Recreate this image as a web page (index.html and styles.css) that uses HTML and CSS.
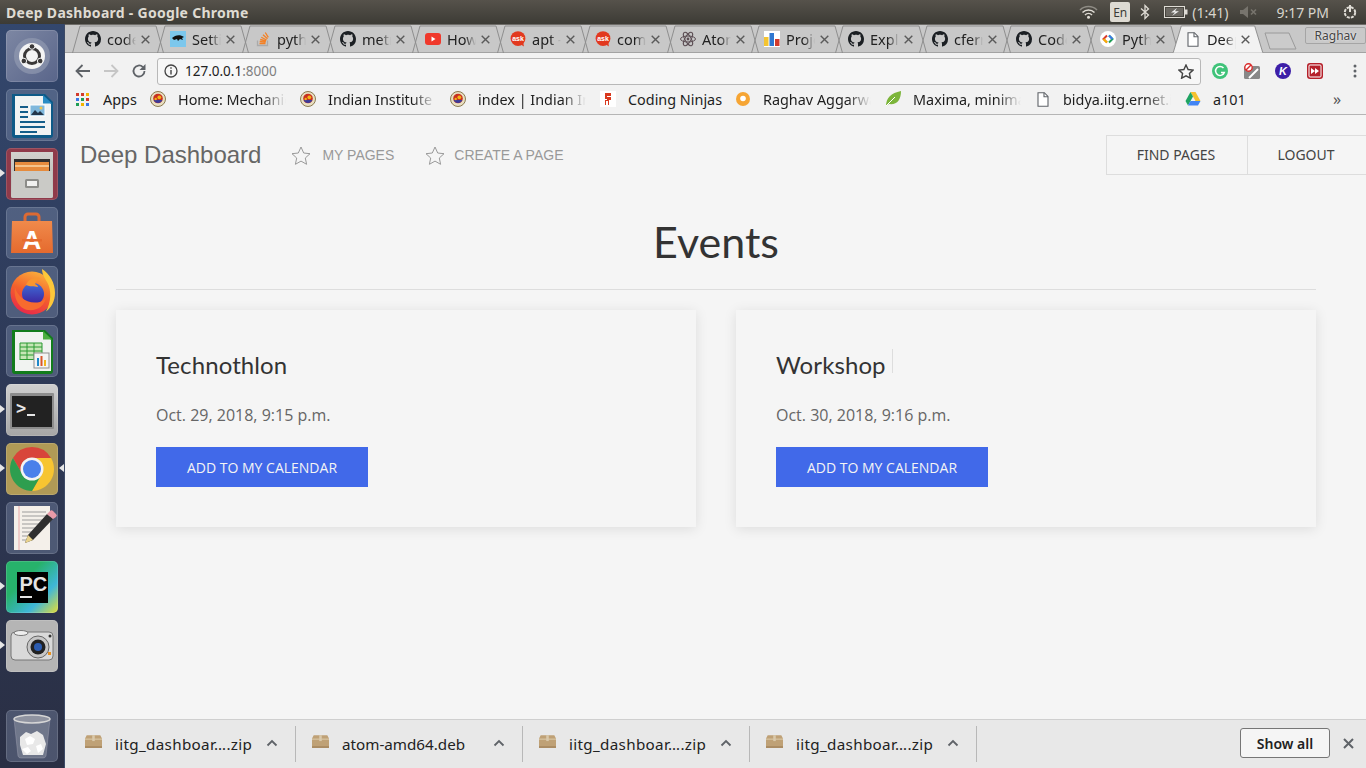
FILE: index.html
```html
<!DOCTYPE html>
<html lang="en">
<head>
<meta charset="utf-8">
<title>Deep Dashboard - Google Chrome</title>
<link rel="stylesheet" href="styles.css">
</head>
<body>
<svg class="defs" width="0" height="0" aria-hidden="true">
  <defs>
    <linearGradient id="ffg" x1="0.7" y1="0" x2="0.3" y2="1"><stop offset="0" stop-color="#fbb03b"/><stop offset=".5" stop-color="#f4602c"/><stop offset="1" stop-color="#e8274b"/></linearGradient>
    <linearGradient id="ffb" x1="0.5" y1="0" x2="0.5" y2="1"><stop offset="0" stop-color="#3f6fd8"/><stop offset="1" stop-color="#3d1f9c"/></linearGradient>
    <linearGradient id="bag" x1="0" y1="0" x2="0" y2="1"><stop offset="0" stop-color="#f08a4b"/><stop offset="1" stop-color="#e56a2e"/></linearGradient>
    <linearGradient id="cab" x1="0" y1="0" x2="0" y2="1"><stop offset="0" stop-color="#d2d2ce"/><stop offset="1" stop-color="#b0b0ac"/></linearGradient>
    <symbol id="gh" viewBox="0 0 16 16"><path fill="#1b1f23" d="M8 0C3.58 0 0 3.58 0 8c0 3.54 2.29 6.53 5.47 7.59.4.07.55-.17.55-.38 0-.19-.01-.82-.01-1.49-2.01.37-2.53-.49-2.69-.94-.09-.23-.48-.94-.82-1.13-.28-.15-.68-.52-.01-.53.63-.01 1.08.58 1.23.82.72 1.21 1.87.87 2.33.66.07-.52.28-.87.51-1.07-1.78-.2-3.64-.89-3.64-3.95 0-.87.31-1.59.82-2.15-.08-.2-.36-1.02.08-2.12 0 0 .67-.21 2.2.82.64-.18 1.32-.27 2-.27.68 0 1.36.09 2 .27 1.53-1.04 2.2-.82 2.2-.82.44 1.1.16 1.92.08 2.12.51.56.82 1.27.82 2.15 0 3.07-1.87 3.75-3.65 3.95.29.25.54.73.54 1.48 0 1.07-.01 1.93-.01 2.2 0 .21.15.46.55.38A8.013 8.013 0 0016 8c0-4.42-3.58-8-8-8z"/></symbol>
    <symbol id="ask" viewBox="0 0 16 16"><circle cx="8" cy="7.600" r="7.400" fill="#e2391f"/><path d="M10 13l4 2.600-1-5z" fill="#e2391f"/><text x="8" y="10" font-family="Liberation Sans" font-size="7" font-weight="700" fill="#fff" text-anchor="middle">ask</text></symbol>
    <symbol id="iitg" viewBox="0 0 16 16"><circle cx="8" cy="8" r="7.500" fill="#e9dfc0" stroke="#8a7a50"/><circle cx="8" cy="7.500" r="4.800" fill="#c9301f"/><path d="M3.600 9a4.800 4.800 0 0 0 8.800 0z" fill="#3b3a9a"/><circle cx="9.300" cy="6.300" r="1.900" fill="#f3b315"/><circle cx="5.700" cy="8" r="1.200" fill="#f3b315"/></symbol>
    <symbol id="doc" viewBox="0 0 12 15"><path d="M1 .7h6.300L11 4.400v9.900H1z" fill="#fff" stroke="#5f6368" stroke-width="1.100"/><path d="M7 .7v4h4" fill="none" stroke="#5f6368" stroke-width="1.100"/></symbol>
    <symbol id="tabshape" viewBox="0 0 92 28"><path d="M.5 28 8 1H84l7.500 27" fill="none" stroke="#8e8e8e"/></symbol>
    <symbol id="tabx" viewBox="0 0 9 9"><path d="m.7.7 7.600 7.600m0-7.600L.7 8.300" stroke="#5a5a5a" stroke-width="1.400"/></symbol>
    <symbol id="pkg" viewBox="0 0 20 15"><path d="M2 0h16l2 4v11H0V4z" fill="#bfa176"/><path d="M0 4h20v1.500H0z" fill="#d8c4a0"/><path d="M8.500 0h3v7h-3z" fill="#d9c8aa"/><path d="M0 13h20v2H0z" fill="#a88a60"/></symbol>
    <symbol id="chev" viewBox="0 0 12 8"><path d="M1.500 6.500 6 2l4.500 4.500" fill="none" stroke="#5f6368" stroke-width="1.800"/></symbol>
  </defs>
</svg>

<header class="titlebar">
  <span class="wintitle">Deep Dashboard - Google Chrome</span>
  <div class="tray">
    <svg class="tray-wifi" width="19" height="14" viewBox="0 0 19 14"><path d="M1 5a12 12 0 0 1 17 0" fill="none" stroke="#8f8c85" stroke-width="1.500"/><path d="M3.500 7.500a8.500 8.500 0 0 1 12 0M6 10a5 5 0 0 1 7 0" fill="none" stroke="#e0ddd6" stroke-width="1.500"/><circle cx="9.500" cy="12.300" r="1.500" fill="#e0ddd6"/></svg>
    <span class="tray-en">En</span>
    <svg class="tray-bt" width="10" height="16" viewBox="0 0 10 16"><path d="M1 4.500 8.500 11 5 14.500v-13L8.500 5 1 11.500" fill="none" stroke="#dfdcd5" stroke-width="1.300"/></svg>
    <svg class="tray-batt" width="24" height="12" viewBox="0 0 24 12"><rect x=".5" y=".5" width="20" height="11" fill="none" stroke="#dfdcd5"/><rect x="21" y="3.500" width="2.500" height="5" fill="#dfdcd5"/><rect x="2" y="2" width="17" height="8" fill="#6b6862"/><path d="M13 2 7 6.500h4l-3 3.500 7-4.700h-4z" fill="#eee"/></svg>
    <span class="tray-text tray-time-left">(1:41)</span>
    <svg class="tray-vol" width="18" height="12" viewBox="0 0 18 12"><path d="M0 4h3l5-4v12L3 8H0z" fill="#77746d"/><path d="m11 3.500 5 5m0-5-5 5" stroke="#77746d" stroke-width="1.600"/></svg>
    <span class="tray-text tray-clock">9:17 PM</span>
    <svg class="tray-gear" width="16" height="16" viewBox="0 0 16 16"><circle cx="8" cy="8.500" r="5.200" fill="none" stroke="#e0ddd6" stroke-width="2" stroke-dasharray="3 1.100"/><path d="M8 1v7" stroke="#e0ddd6" stroke-width="2"/></svg>
  </div>
</header>

<div class="desktop">
  <nav class="launcher">
    <div class="tile tile-ubuntu">
      <svg width="52" height="52" viewBox="0 0 52 52"><circle cx="26" cy="26" r="18" fill="#98a0b6" opacity=".6"/><circle cx="26" cy="26" r="13" fill="#f4f4f4"/><circle cx="26" cy="26" r="7.500" fill="none" stroke="#3a3838" stroke-width="3"/><circle cx="26" cy="16.500" r="2.800" fill="#3a3838" stroke="#f4f4f4"/><circle cx="17.800" cy="31" r="2.800" fill="#3a3838" stroke="#f4f4f4"/><circle cx="34.200" cy="31" r="2.800" fill="#3a3838" stroke="#f4f4f4"/></svg>
    </div>
    <div class="tile">
      <svg width="52" height="52" viewBox="0 0 52 52"><path d="M6 5h33l8 8v33a3 3 0 0 1-3 3H9a3 3 0 0 1-3-3z" fill="#0e5a88"/><path d="M9 7h28l8 8v31H9z" fill="#f1f3f3"/><path d="M37 6l9 8.500h-9z" fill="#2a8cc4"/><path d="M14 17h8v2h-8zm0 5h8v2h-8zm0 5h8v2h-8zm0 5h25v2H14zm0 5h25v2H14zm0 5h17v2H14z" fill="#155e8a"/><rect x="24" y="16" width="15" height="11" fill="#7fb8dc" stroke="#fff"/><path d="m25 26 4-5 3 3 2-2 4 4z" fill="#23364a"/><circle cx="35" cy="19" r="1.500" fill="#f3c64b"/></svg>
    </div>
    <div class="tile tile-red">
      <svg width="52" height="52" viewBox="0 0 52 52"><path d="M5 4h42v44a2 2 0 0 1-2 2H7a2 2 0 0 1-2-2z" fill="url(#cab)"/><rect x="8" y="11" width="36" height="13" fill="#2f2f2f"/><path d="M9 14h34v9H9z" fill="#e58b3d"/><path d="M9 17h34v2H9z" fill="#f4c48c"/><path d="M6 23h40l1 25a2 2 0 0 1-2 2H7a2 2 0 0 1-2-2z" fill="#cacac6"/><rect x="19" y="31" width="14" height="9" rx="1.500" fill="#8c8c88"/><rect x="21" y="33" width="10" height="5" fill="#f1f1ef"/></svg>
    </div>
    <div class="tile">
      <svg width="52" height="52" viewBox="0 0 52 52"><path d="M19 16v-6a3 3 0 0 1 3-3h8a3 3 0 0 1 3 3v6" fill="none" stroke="#dd6a33" stroke-width="3"/><path d="M6 14h40l1 32H5z" fill="url(#bag)"/><text x="26" y="42" font-family="Liberation Sans" font-size="26" font-weight="700" fill="#fff" text-anchor="middle">A</text><path d="M16 32h20v2.500H16z" fill="#e56a2e"/></svg>
    </div>
    <div class="tile">
      <svg width="52" height="52" viewBox="0 0 52 52"><circle cx="26" cy="27" r="21.500" fill="url(#ffg)"/><path d="M36 3c8 5 13 14 13 24 0 8-3.500 14.500-9 18.500 5-9 6-21 1-29.500-2-3.500-5-8-5-13z" fill="#fcc73a"/><circle cx="27" cy="28" r="11" fill="url(#ffb)"/><path d="M9 21c2 9 12 18 25 15 3-1 5-3 6-5-1 9-9 14-18 13C14 43 7 33 9 21z" fill="#f76b2e"/><path d="M20 19c2-6 9-9 15-7-3 1-5 3-6 6 2 1 3 2 3 3-4-1-8 0-12-2z" fill="#f9962f"/></svg>
    </div>
    <div class="tile">
      <svg width="52" height="52" viewBox="0 0 52 52"><path d="M6 5h33l8 8v33a3 3 0 0 1-3 3H9a3 3 0 0 1-3-3z" fill="#127c1c"/><path d="M9 7h28l8 8v31H9z" fill="#f1f3f1"/><path d="M37 6l9 8.500h-9z" fill="#4cae40"/><path d="M14 18h22v17H14z" fill="#c6e6b6"/><path d="M14 18h22M14 22h22M14 26h22M14 30h22M14 34.500h22M14 18v17M21 18v17M28 18v17M36 18v17" fill="none" stroke="#2b9a32"/><rect x="28" y="28" width="15" height="15" fill="#f4f4f4" stroke="#8f8f8f"/><path d="M31 33h2v8h-2z" fill="#1e88c9"/><path d="M34.500 31h2v10h-2z" fill="#d9572b"/><path d="M38 35h2v6h-2z" fill="#f2b51c"/></svg>
    </div>
    <div class="tile tile-gray">
      <svg width="52" height="52" viewBox="0 0 52 52"><rect x="4" y="9" width="44" height="36" rx="1" fill="#8d8d8d"/><rect x="6" y="12" width="40" height="31" fill="#222"/><text x="10" y="30" font-family="DejaVu Sans Mono" font-size="17" font-weight="700" fill="#e6e6e6">&gt;</text><path d="M21 30h8v2h-8z" fill="#e6e6e6"/></svg>
    </div>
    <div class="tile tile-gold">
      <svg width="52" height="52" viewBox="0 0 52 52"><path d="M26 4A22 22 0 0 1 45.050 15H26a11 11 0 0 0-9.500 16.500L6.950 15A22 22 0 0 1 26 4z" fill="#d8453a"/><path d="M45.050 15A22 22 0 0 1 26 48l9.500-16.500A11 11 0 0 0 26 15z" fill="#f7c531"/><path d="M6.950 15A22 22 0 0 0 26 48l9.500-16.500a11 11 0 0 1-19 0z" fill="#2e9e4f"/><circle cx="26" cy="26" r="11.500" fill="#f3f3f3"/><circle cx="26" cy="26" r="9" fill="#4a80ea"/></svg>
    </div>
    <div class="tile">
      <svg width="52" height="52" viewBox="0 0 52 52"><path d="M8 4h36v44H8z" fill="#f4f0ea"/><path d="M13 4v44" stroke="#e8a8a8"/><path d="M16 10h24M16 14h24M16 18h24M16 22h22M16 26h18M16 30h14M16 34h10M16 38h10" stroke="#9c9c9c"/><path d="M41 12l6 5-20 21-8 3 3-8z" fill="#2f2f2f"/><path d="M41 12l3-3a2 2 0 0 1 3 0l3 3a2 2 0 0 1 0 3l-3 2z" fill="#e89aa8"/><path d="M22 33l5 5-8 3z" fill="#e9d28a"/></svg>
    </div>
    <div class="tile tile-pc">
      <svg width="52" height="52" viewBox="0 0 52 52"><rect x="11" y="11" width="31" height="31" fill="#000"/><text x="13.500" y="30" font-family="Liberation Sans" font-size="20" font-weight="700" fill="#e4e4e4">PC</text><path d="M14 35h12v2H14z" fill="#e4e4e4"/></svg>
    </div>
    <div class="tile tile-cam">
      <svg width="52" height="52" viewBox="0 0 52 52"><rect x="5" y="12" width="42" height="28" rx="4" fill="#d9d9d9" stroke="#777"/><ellipse cx="15" cy="13" rx="7" ry="2.500" fill="#eee" stroke="#777"/><circle cx="32" cy="27" r="11" fill="#c7c7c7" stroke="#666"/><circle cx="32" cy="27" r="7.500" fill="#222"/><circle cx="32" cy="27" r="4" fill="#2c5cb0"/><rect x="42" y="32" width="3" height="3" fill="#e89020"/><circle cx="44" cy="16" r="1.500" fill="#333"/></svg>
    </div>
    <div class="launcher-gap"></div>
    <div class="tile">
      <svg width="52" height="52" viewBox="0 0 52 52"><path d="M8 9h36l-4 37a3 3 0 0 1-3 2H15a3 3 0 0 1-3-2z" fill="#fff" fill-opacity=".2" stroke="#aab" stroke-opacity=".4"/><ellipse cx="26" cy="9" rx="18" ry="4" fill="#8f93a0" stroke="#d6d6d6" stroke-width="1.500"/><path d="M14 27l6-5 5 2 6-3 6 4 3 9-3 11H17l-3-10z" fill="#e8e8e8"/><path d="M19 29l5-3 5 3-2 5-6 1zM16 39l6-2 3 4-4 3zM30 36l5-2 2 5-5 4z" fill="#fff"/></svg>
    </div>
    <i class="pip pip-files"></i>
    <i class="pip pip-term"></i>
    <i class="pip pip-chrome"></i>
    <i class="pip pip-chrome-r"></i>
    <i class="pip pip-pc"></i>
    <i class="pip pip-cam"></i>
  </nav>

  <div class="browser">
    <div class="tabstrip">
      <div class="tab tab-wide"><svg class="tab-edge"><use href="#tabshape"/></svg><svg class="fav"><use href="#gh"/></svg><span class="tab-title">code</span><svg class="tab-x"><use href="#tabx"/></svg></div>
      <div class="tab tab-wide"><svg class="tab-edge"><use href="#tabshape"/></svg><svg class="fav" viewBox="0 0 16 16"><rect width="16" height="16" fill="#7cc7ec"/><path d="M2 7c3-3 8-4 12-1l-2 1 1 2-3-1-2 2-1-2-3 1z" fill="#111"/></svg><span class="tab-title">Settings</span><svg class="tab-x"><use href="#tabx"/></svg></div>
      <div class="tab tab-wide"><svg class="tab-edge"><use href="#tabshape"/></svg><svg class="fav" viewBox="0 0 16 16"><path d="M2.500 9.500v5h10v-5" fill="none" stroke="#aaa" stroke-width="1.300"/><path d="M4.500 12.500h6M4.700 10.500l6 .6M5.200 8.500l5.800 1.500M6.300 6.200l5.300 2.800M8 3.800l4.500 4M10.300 1.500l3 4.800" stroke="#f48024" stroke-width="1.300"/></svg><span class="tab-title">python</span><svg class="tab-x"><use href="#tabx"/></svg></div>
      <div class="tab tab-wide"><svg class="tab-edge"><use href="#tabshape"/></svg><svg class="fav"><use href="#gh"/></svg><span class="tab-title">metric</span><svg class="tab-x"><use href="#tabx"/></svg></div>
      <div class="tab tab-wide"><svg class="tab-edge"><use href="#tabshape"/></svg><svg class="fav" viewBox="0 0 16 16"><rect y="2" width="16" height="12" rx="3" fill="#f0382b"/><path d="m6.500 5.500 4 2.500-4 2.500z" fill="#fff"/></svg><span class="tab-title">How to</span><svg class="tab-x"><use href="#tabx"/></svg></div>
      <div class="tab tab-wide"><svg class="tab-edge"><use href="#tabshape"/></svg><svg class="fav"><use href="#ask"/></svg><span class="tab-title">apt -</span><svg class="tab-x"><use href="#tabx"/></svg></div>
      <div class="tab tab-wide"><svg class="tab-edge"><use href="#tabshape"/></svg><svg class="fav"><use href="#ask"/></svg><span class="tab-title">comm</span><svg class="tab-x"><use href="#tabx"/></svg></div>
      <div class="tab"><svg class="tab-edge"><use href="#tabshape"/></svg><svg class="fav" viewBox="0 0 16 16"><g fill="none" stroke="#5d4f55"><ellipse cx="8" cy="8" rx="7.500" ry="3"/><ellipse cx="8" cy="8" rx="7.500" ry="3" transform="rotate(60 8 8)"/><ellipse cx="8" cy="8" rx="7.500" ry="3" transform="rotate(120 8 8)"/></g><circle cx="8" cy="8" r="1.400" fill="#5d4f55"/></svg><span class="tab-title">Atom</span><svg class="tab-x"><use href="#tabx"/></svg></div>
      <div class="tab"><svg class="tab-edge"><use href="#tabshape"/></svg><svg class="fav" viewBox="0 0 16 16"><rect width="16" height="16" fill="#fff"/><rect x="0" y="6" width="4.500" height="9" fill="#f4c430"/><rect x="5.500" y="2" width="4.500" height="13" fill="#2f77d0"/><rect x="11" y="8" width="4.500" height="7" fill="#d33b2c"/></svg><span class="tab-title">Project</span><svg class="tab-x"><use href="#tabx"/></svg></div>
      <div class="tab"><svg class="tab-edge"><use href="#tabshape"/></svg><svg class="fav"><use href="#gh"/></svg><span class="tab-title">Explore</span><svg class="tab-x"><use href="#tabx"/></svg></div>
      <div class="tab"><svg class="tab-edge"><use href="#tabshape"/></svg><svg class="fav"><use href="#gh"/></svg><span class="tab-title">cfernet</span><svg class="tab-x"><use href="#tabx"/></svg></div>
      <div class="tab"><svg class="tab-edge"><use href="#tabshape"/></svg><svg class="fav"><use href="#gh"/></svg><span class="tab-title">Code</span><svg class="tab-x"><use href="#tabx"/></svg></div>
      <div class="tab"><svg class="tab-edge"><use href="#tabshape"/></svg><svg class="fav" viewBox="0 0 16 16"><circle cx="8" cy="8" r="8" fill="#fff"/><path d="M7 4.500 3.500 8 7 11.500" fill="none" stroke="#d9392c" stroke-width="2"/><path d="M9 4.500 12.500 8 9 11.500" fill="none" stroke="#1f9d55" stroke-width="2"/><path d="M3.500 8 7 11.500" stroke="#f4b400" stroke-width="2"/><path d="M9 4.500 12.500 8" stroke="#3b78e7" stroke-width="2"/></svg><span class="tab-title">Python</span><svg class="tab-x"><use href="#tabx"/></svg></div>
      <div class="tab tab-active"><svg class="tab-edge" viewBox="0 0 94 29"><path d="M.5 29 9 1H85l8.500 28z" fill="#f2f2f2" stroke="#8e8e8e"/><path d="M1 28.500h92V29.500H1z" fill="#f2f2f2"/></svg><svg class="fav fav-doc"><use href="#doc"/></svg><span class="tab-title">Deep</span><svg class="tab-x"><use href="#tabx"/></svg></div>
      <svg class="newtab" width="34" height="18" viewBox="0 0 34 18"><path d="M1 1h24l7 16H6z" fill="#cbcbcb" stroke="#9a9a9a"/></svg>
      <span class="profile">Raghav</span>
    </div>

    <div class="toolbar">
      <svg class="tool tool-back" width="16" height="14" viewBox="0 0 16 14"><path d="M15 7H2M7.500 1 1.500 7l6 6" fill="none" stroke="#5f6368" stroke-width="1.800"/></svg>
      <svg class="tool tool-fwd" width="16" height="14" viewBox="0 0 16 14"><path d="M1 7h13M8.500 1l6 6-6 6" fill="none" stroke="#c6c6c6" stroke-width="1.800"/></svg>
      <svg class="tool tool-reload" width="16" height="16" viewBox="0 0 16 16"><path d="M13.500 8a5.500 5.500 0 1 1-1.600-3.900" fill="none" stroke="#5f6368" stroke-width="1.800"/><path d="M14.500 1v6h-6z" fill="#5f6368"/></svg>
      <div class="omnibox">
        <svg width="14" height="14" viewBox="0 0 14 14"><circle cx="7" cy="7" r="6" fill="none" stroke="#444" stroke-width="1.300"/><path d="M6.300 6h1.400v4.500H6.300zM6.300 3.300h1.400v1.500H6.300z" fill="#444"/></svg>
        <span class="url">127.0.0.1<span class="url-port">:8000</span></span>
        <svg class="omni-star" width="16" height="15" viewBox="0 0 16 15"><path d="m8 1 2.100 4.500 4.900.6-3.600 3.300 1 4.800L8 11.800l-4.400 2.400 1-4.800L1 6.100l4.900-.6z" fill="none" stroke="#444" stroke-width="1.400"/></svg>
      </div>
      <div class="exts">
        <svg width="16" height="16" viewBox="0 0 16 16"><circle cx="8" cy="8" r="8" fill="#3fc379"/><path d="M11.500 5a4.500 4.500 0 1 0 .8 4.500H9" fill="none" stroke="#fff" stroke-width="1.500"/></svg>
        <svg width="16" height="16" viewBox="0 0 16 16"><rect y="3" width="16" height="13" rx="1.500" fill="#888"/><path d="m5 15 9-9" stroke="#fff" stroke-width="2"/><circle cx="4.500" cy="4.500" r="3.700" fill="#fff" stroke="#d92b2b" stroke-width="1.400"/><path d="m2 7 5-5" stroke="#d92b2b" stroke-width="1.400"/></svg>
        <svg width="16" height="16" viewBox="0 0 16 16"><circle cx="8" cy="8" r="8" fill="#3d1fa8"/><text x="8" y="12" font-family="Liberation Sans" font-size="11" font-weight="700" font-style="italic" fill="#fff" text-anchor="middle">K</text></svg>
        <svg width="16" height="16" viewBox="0 0 16 16"><rect width="16" height="16" rx="3" fill="#b5202a"/><rect x="2" y="2" width="12" height="12" rx="1" fill="none" stroke="#fff"/><path d="M4 5l4 3-4 3zM8 5l4 3-4 3z" fill="#fff"/></svg>
      </div>
      <svg class="tool-menu" width="4" height="14" viewBox="0 0 4 14"><circle cx="2" cy="2" r="1.500" fill="#5f6368"/><circle cx="2" cy="7" r="1.500" fill="#5f6368"/><circle cx="2" cy="12" r="1.500" fill="#5f6368"/></svg>
    </div>

    <div class="bookmarks">
      <div class="bm bm-apps"><svg width="13" height="13" viewBox="0 0 13 13"><rect width="3" height="3" fill="#d33b2c"/><rect x="5" width="3" height="3" fill="#d33b2c"/><rect x="10" width="3" height="3" fill="#f4b400"/><rect y="5" width="3" height="3" fill="#3b78e7"/><rect x="5" y="5" width="3" height="3" fill="#1f9d55"/><rect x="10" y="5" width="3" height="3" fill="#d33b2c"/><rect y="10" width="3" height="3" fill="#1f9d55"/><rect x="5" y="10" width="3" height="3" fill="#f4b400"/><rect x="10" y="10" width="3" height="3" fill="#3b78e7"/></svg><span class="bm-label">Apps</span></div>
      <div class="bm"><svg class="fav"><use href="#iitg"/></svg><span class="bm-label bm-fade">Home: Mechanical</span></div>
      <div class="bm"><svg class="fav"><use href="#iitg"/></svg><span class="bm-label bm-fade">Indian Institute of</span></div>
      <div class="bm"><svg class="fav"><use href="#iitg"/></svg><span class="bm-label bm-fade">index | Indian Institute</span></div>
      <div class="bm bm-cn"><svg class="fav" viewBox="0 0 16 16"><rect width="16" height="16" fill="#fff"/><path d="M5 2h6v3H7v1h4v3H9v5H8V10H6v4H5V9h2V8H5z" fill="#d9381e"/></svg><span class="bm-label">Coding Ninjas</span></div>
      <div class="bm"><svg class="fav" viewBox="0 0 16 16"><circle cx="8" cy="8" r="7" fill="#f6a534"/><circle cx="8" cy="7.500" r="2.800" fill="#fff"/></svg><span class="bm-label bm-fade">Raghav Aggarwal</span></div>
      <div class="bm"><svg class="fav" viewBox="0 0 16 16"><path d="M1 15C1 7 6 2 16 0c0 9-4 14-12 13z" fill="#7cb53a"/><path d="m1 15 9-9" stroke="#fff"/></svg><span class="bm-label bm-fade">Maxima, minima</span></div>
      <div class="bm"><svg class="fav fav-doc"><use href="#doc"/></svg><span class="bm-label bm-fade">bidya.iitg.ernet.in</span></div>
      <div class="bm"><svg class="fav" viewBox="0 0 16 14"><path d="M5.500 0h5l5 9h-5z" fill="#f6c12f"/><path d="M5.500 0 .5 9l2.500 4.500 5-9z" fill="#1fa463"/><path d="M3 13.500h10L15.500 9h-10z" fill="#4285f4"/></svg><span class="bm-label">a101</span></div>
      <span class="bm-more">»</span>
    </div>

    <main class="page">
      <div class="topnav">
        <a class="brand">Deep Dashboard</a>
        <a class="navlink"><svg width="20" height="19" viewBox="0 0 20 19"><path d="m10 1 2.700 6 6.300.7-4.700 4.300 1.300 6.300-5.600-3.200-5.600 3.200 1.300-6.300L1 7.700 7.300 7z" fill="none" stroke="#999"/></svg>MY PAGES</a>
        <a class="navlink navlink-create"><svg width="20" height="19" viewBox="0 0 20 19"><path d="m10 1 2.700 6 6.300.7-4.700 4.300 1.300 6.300-5.600-3.200-5.600 3.200 1.300-6.300L1 7.700 7.300 7z" fill="none" stroke="#999"/></svg>CREATE A PAGE</a>
        <div class="nav-right">
          <a class="navbtn navbtn-find">FIND PAGES</a>
          <a class="navbtn navbtn-out">LOGOUT</a>
        </div>
      </div>
      <section class="events">
        <h1 class="events-title">Events</h1>
        <div class="cards">
          <article class="card">
            <h2 class="card-title">Technothlon</h2>
            <p class="card-date">Oct. 29, 2018, 9:15 p.m.</p>
            <a class="card-btn">ADD TO MY CALENDAR</a>
          </article>
          <article class="card">
            <h2 class="card-title card-title-caret">Workshop</h2>
            <p class="card-date">Oct. 30, 2018, 9:16 p.m.</p>
            <a class="card-btn">ADD TO MY CALENDAR</a>
          </article>
        </div>
      </section>
    </main>

    <footer class="downloads">
      <div class="dl dl-first"><svg class="dl-ico"><use href="#pkg"/></svg><span class="dl-name dl-zip">iitg_dashboar….zip</span><svg class="dl-chev"><use href="#chev"/></svg></div>
      <div class="dl"><svg class="dl-ico"><use href="#pkg"/></svg><span class="dl-name">atom-amd64.deb</span><svg class="dl-chev"><use href="#chev"/></svg></div>
      <div class="dl"><svg class="dl-ico"><use href="#pkg"/></svg><span class="dl-name dl-zip">iitg_dashboar….zip</span><svg class="dl-chev"><use href="#chev"/></svg></div>
      <div class="dl"><svg class="dl-ico"><use href="#pkg"/></svg><span class="dl-name dl-zip">iitg_dashboar….zip</span><svg class="dl-chev"><use href="#chev"/></svg></div>
      <button class="showall">Show all</button>
      <svg class="dl-close" width="11" height="11" viewBox="0 0 11 11"><path d="m1 1 9 9m0-9-9 9" stroke="#5f6368" stroke-width="2"/></svg>
    </footer>
  </div>
</div>
</body>
</html>
```

FILE: styles.css
```css
* { box-sizing: border-box; }
html, body { margin: 0; padding: 0; }
body {
  width: 1366px;
  height: 768px;
  overflow: hidden;
  display: flex;
  flex-direction: column;
  font-family: "Noto Sans", sans-serif;
  background: #f5f5f5;
}
.defs { position: absolute; }
svg { display: block; flex: none; }

/* Ubuntu top panel */
.titlebar {
  height: 24px;
  flex: none;
  display: flex;
  align-items: center;
  justify-content: space-between;
  padding-left: 6px;
  background: linear-gradient(#56524b, #3c3b35);
  color: #dfdbd2;
}
.wintitle { font-size: 14px; font-weight: 700; letter-spacing: .28px; }
.tray { display: flex; align-items: center; }
.tray-text { font-size: 14px; color: #d8d5cd; }
.tray-en {
  width: 20px; height: 20px; margin-left: 12px;
  display: flex; align-items: center; justify-content: center;
  background: #dedbd3; color: #3c3b37; border-radius: 2px; font-size: 12px;
}
.tray-bt { margin-left: 10px; }
.tray-batt { margin-left: 14px; }
.tray-time-left { margin-left: 4px; }
.tray-vol { margin-left: 12px; }
.tray-clock { margin-left: 18px; }
.tray-gear { margin: 0 8px 0 13px; }

.desktop { flex: 1; min-height: 0; display: flex; }

/* Launcher */
.launcher {
  position: relative;
  width: 65px;
  flex: none;
  display: flex;
  flex-direction: column;
  gap: 7px;
  padding: 6px 0 6px 6px;
  background: linear-gradient(#33476d, #2e3a58 45%, #2a2f44);
  border-right: 1px solid #3d4a66;
}
.tile {
  width: 52px; height: 52px; flex: none;
  border-radius: 5px;
  background: rgba(150, 165, 195, .32);
  box-shadow: inset 0 0 0 1px rgba(255, 255, 255, .14);
}
.tile-ubuntu { background: linear-gradient(135deg, #7d87a3, #59658a); }
.tile-red { background: #8f3a4a; }
.tile-gray { background: linear-gradient(#cfcfcf, #a6a6a6); }
.tile-gold { background: #b09a56; }
.tile-pc { background: linear-gradient(135deg, #27b26b 35%, #3fb6d8 70%, #e5dd35); }
.tile-cam { background: #b5b5b5; }
.launcher-gap { flex: 1; }
.pip {
  position: absolute;
  width: 0; height: 0;
  border-top: 4px solid transparent;
  border-bottom: 4px solid transparent;
  border-left: 5px solid #e6e6e6;
  left: 0;
}
.pip-files { top: 145px; }
.pip-term { top: 381px; }
.pip-chrome { top: 440px; }
.pip-pc { top: 558px; }
.pip-cam { top: 617px; }
.pip-chrome-r {
  top: 440px; left: 59px;
  border-left: 0;
  border-right: 5px solid #e6e6e6;
}

/* Browser chrome */
.browser { flex: 1; min-width: 0; display: flex; flex-direction: column; }
.tabstrip {
  height: 29px; flex: none;
  position: relative;
  display: flex;
  padding-left: 7px;
  background: #c8c8c8;
  border-bottom: 1px solid #a3a3a3;
  border-top: 1px solid #6e6c68;
}
.tab {
  position: relative;
  width: 84px; height: 28px; flex: none;
  display: flex; align-items: center;
  padding-left: 13px;
  font-size: 14.5px; color: #222;
}
.tab-wide { width: 85px; }
.tab-edge {
  position: absolute;
  left: 0; top: 0;
  width: 92px; height: 28px;
}
.tab-active { z-index: 1; padding-left: 14px; }
.tab-active .tab-edge { width: 94px; }
.fav { position: relative; width: 16px; height: 16px; }
.fav-doc { width: 12px; height: 15px; margin: 0 2px; }
.tab-title {
  position: relative;
  width: 29px; margin-left: 6px;
  overflow: hidden; white-space: nowrap;
  -webkit-mask-image: linear-gradient(90deg, #000 62%, transparent);
  mask-image: linear-gradient(90deg, #000 62%, transparent);
}
.tab-x { position: relative; width: 9px; height: 9px; margin-left: 5px; }
.newtab { margin: 7px 0 0 9px; }
.profile {
  position: absolute;
  right: 0; top: 2px;
  width: 61px; height: 17px;
  display: flex; align-items: center; justify-content: center;
  background: #c9c9c9;
  border: 1px solid #a5a5a5;
  border-radius: 2px;
  font-size: 12px; color: #444;
  text-shadow: 0 0 2px #fff;
}

.toolbar {
  height: 33px; flex: none;
  display: flex; align-items: center;
  padding-top: 3px;
  background: #f2f2f2;
}
.tool-back { margin-left: 10px; }
.tool-fwd { margin-left: 12px; }
.tool-reload { margin-left: 12px; }
.omnibox {
  width: 1044px; height: 27px;
  margin-left: 10px;
  display: flex; align-items: center;
  padding: 0 5px 0 6px;
  background: #f7f7f7;
  border: 1px solid #b8b8b8;
  border-radius: 3px;
}
.url { margin-left: 7px; font-size: 13.5px; color: #222; }
.url-port { color: #808080; }
.omni-star { margin-left: auto; margin-right: 1px; }
.exts { display: flex; gap: 15.5px; margin-left: 11px; }
.tool-menu { margin-left: 30px; }

.bookmarks {
  height: 29px; flex: none;
  display: flex; align-items: center;
  padding: 0 0 2px 11px;
  background: #f2f2f2;
  border-bottom: 1px solid #b5b5b5;
  font-size: 14.4px; color: #1e1e1e;
}
.bm { width: 150px; flex: none; display: flex; align-items: center; }
.bm-apps { width: 74px; }
.bm-cn { width: 135px; }
.bm-label { margin-left: 12px; white-space: nowrap; overflow: hidden; }
.bm-apps .bm-label { margin-left: 14px; }
.bm-fade {
  width: 108px;
  -webkit-mask-image: linear-gradient(90deg, #000 78%, transparent);
  mask-image: linear-gradient(90deg, #000 78%, transparent);
}
.bm-more { position: absolute; left: 1333px; font-size: 16px; color: #555; }

/* Page */
.page { flex: 1; min-height: 0; background: #f5f5f5; }
.topnav {
  height: 40px;
  margin-top: 20px;
  display: flex; align-items: center;
  padding-left: 15px;
  font-family: "Liberation Sans", sans-serif;
}
.brand { font-size: 24px; color: #666; margin-right: 30px; }
.navlink {
  display: flex; align-items: center; gap: 11px;
  margin-right: 31px;
  font-size: 14px; color: #999;
}
.navlink-create { gap: 9px; }
.nav-right { margin-left: auto; display: flex; height: 40px; }
.navbtn {
  display: flex; align-items: center; justify-content: center;
  padding: 0 2px 2px 0;
  border: 1px solid #ddd;
  font-family: "Noto Sans", sans-serif;
  font-size: 14px; color: #444;
}
.navbtn-find { width: 141px; border-right: 0; }
.navbtn-out { width: 119px; border-right: 0; }

.events { width: 1200px; margin-left: 51px; }
.events-title {
  margin: 0;
  height: 115px;
  padding-top: 41px;
  text-align: center;
  font-family: Lato, sans-serif;
  font-size: 43px; font-weight: 400; line-height: 52px;
  color: #333;
  border-bottom: 1px solid #ddd;
}
.cards {
  display: grid;
  grid-template-columns: 1fr 1fr;
  gap: 40px;
  margin-top: 20px;
}
.card {
  height: 217px;
  padding: 40px;
  background: #f5f5f5;
  box-shadow: 0 2px 12px rgba(0, 0, 0, .1);
}
.card-title {
  position: relative;
  width: fit-content;
  margin: 0;
  font-family: Lato, sans-serif;
  font-size: 24px; font-weight: 400; line-height: 30px;
  letter-spacing: .1px;
  color: #333;
}
.card-title-caret::after {
  content: "";
  position: absolute;
  right: -7px; top: -1px;
  width: 1px; height: 24px;
  background: #ddd;
}
.card-date {
  margin: 23px 0 0;
  font-family: "Open Sans", sans-serif;
  font-size: 16px; line-height: 24px;
  color: #666;
}
.card-btn {
  width: 212px; height: 40px;
  margin-top: 20px;
  display: flex; align-items: center; justify-content: center;
  background: #4169e9;
  font-family: "Open Sans", sans-serif;
  font-size: 14px; color: #f4f4f4;
}

/* Download shelf */
.downloads {
  position: relative;
  height: 49px; flex: none;
  display: flex; align-items: center;
  padding-left: 4px;
  background: #e8e8e8;
  border-top: 1px solid #cfcfcf;
  font-size: 15.2px; color: #222;
}
.dl {
  width: 227px; height: 36px; flex: none;
  display: flex; align-items: center;
  padding-left: 16px;
  border-right: 1px solid #b8b8b8;
}
.dl-ico { width: 17px; height: 13px; margin-top: -5px; }
.dl-name { width: 151px; margin-left: 13px; white-space: nowrap; }
.dl-zip { letter-spacing: .33px; }
.dl-chev { width: 12px; height: 8px; margin-top: -2px; }
.showall {
  position: absolute;
  left: 1175px; top: 8px;
  width: 90px; height: 30px;
  padding: 0;
  background: #f5f5f5;
  border: 1px solid #767676;
  border-radius: 3px;
  font-family: "Noto Sans", sans-serif;
  font-size: 14px; font-weight: 600; color: #222;
}
.dl-close { position: absolute; left: 1278px; top: 18px; }
```
